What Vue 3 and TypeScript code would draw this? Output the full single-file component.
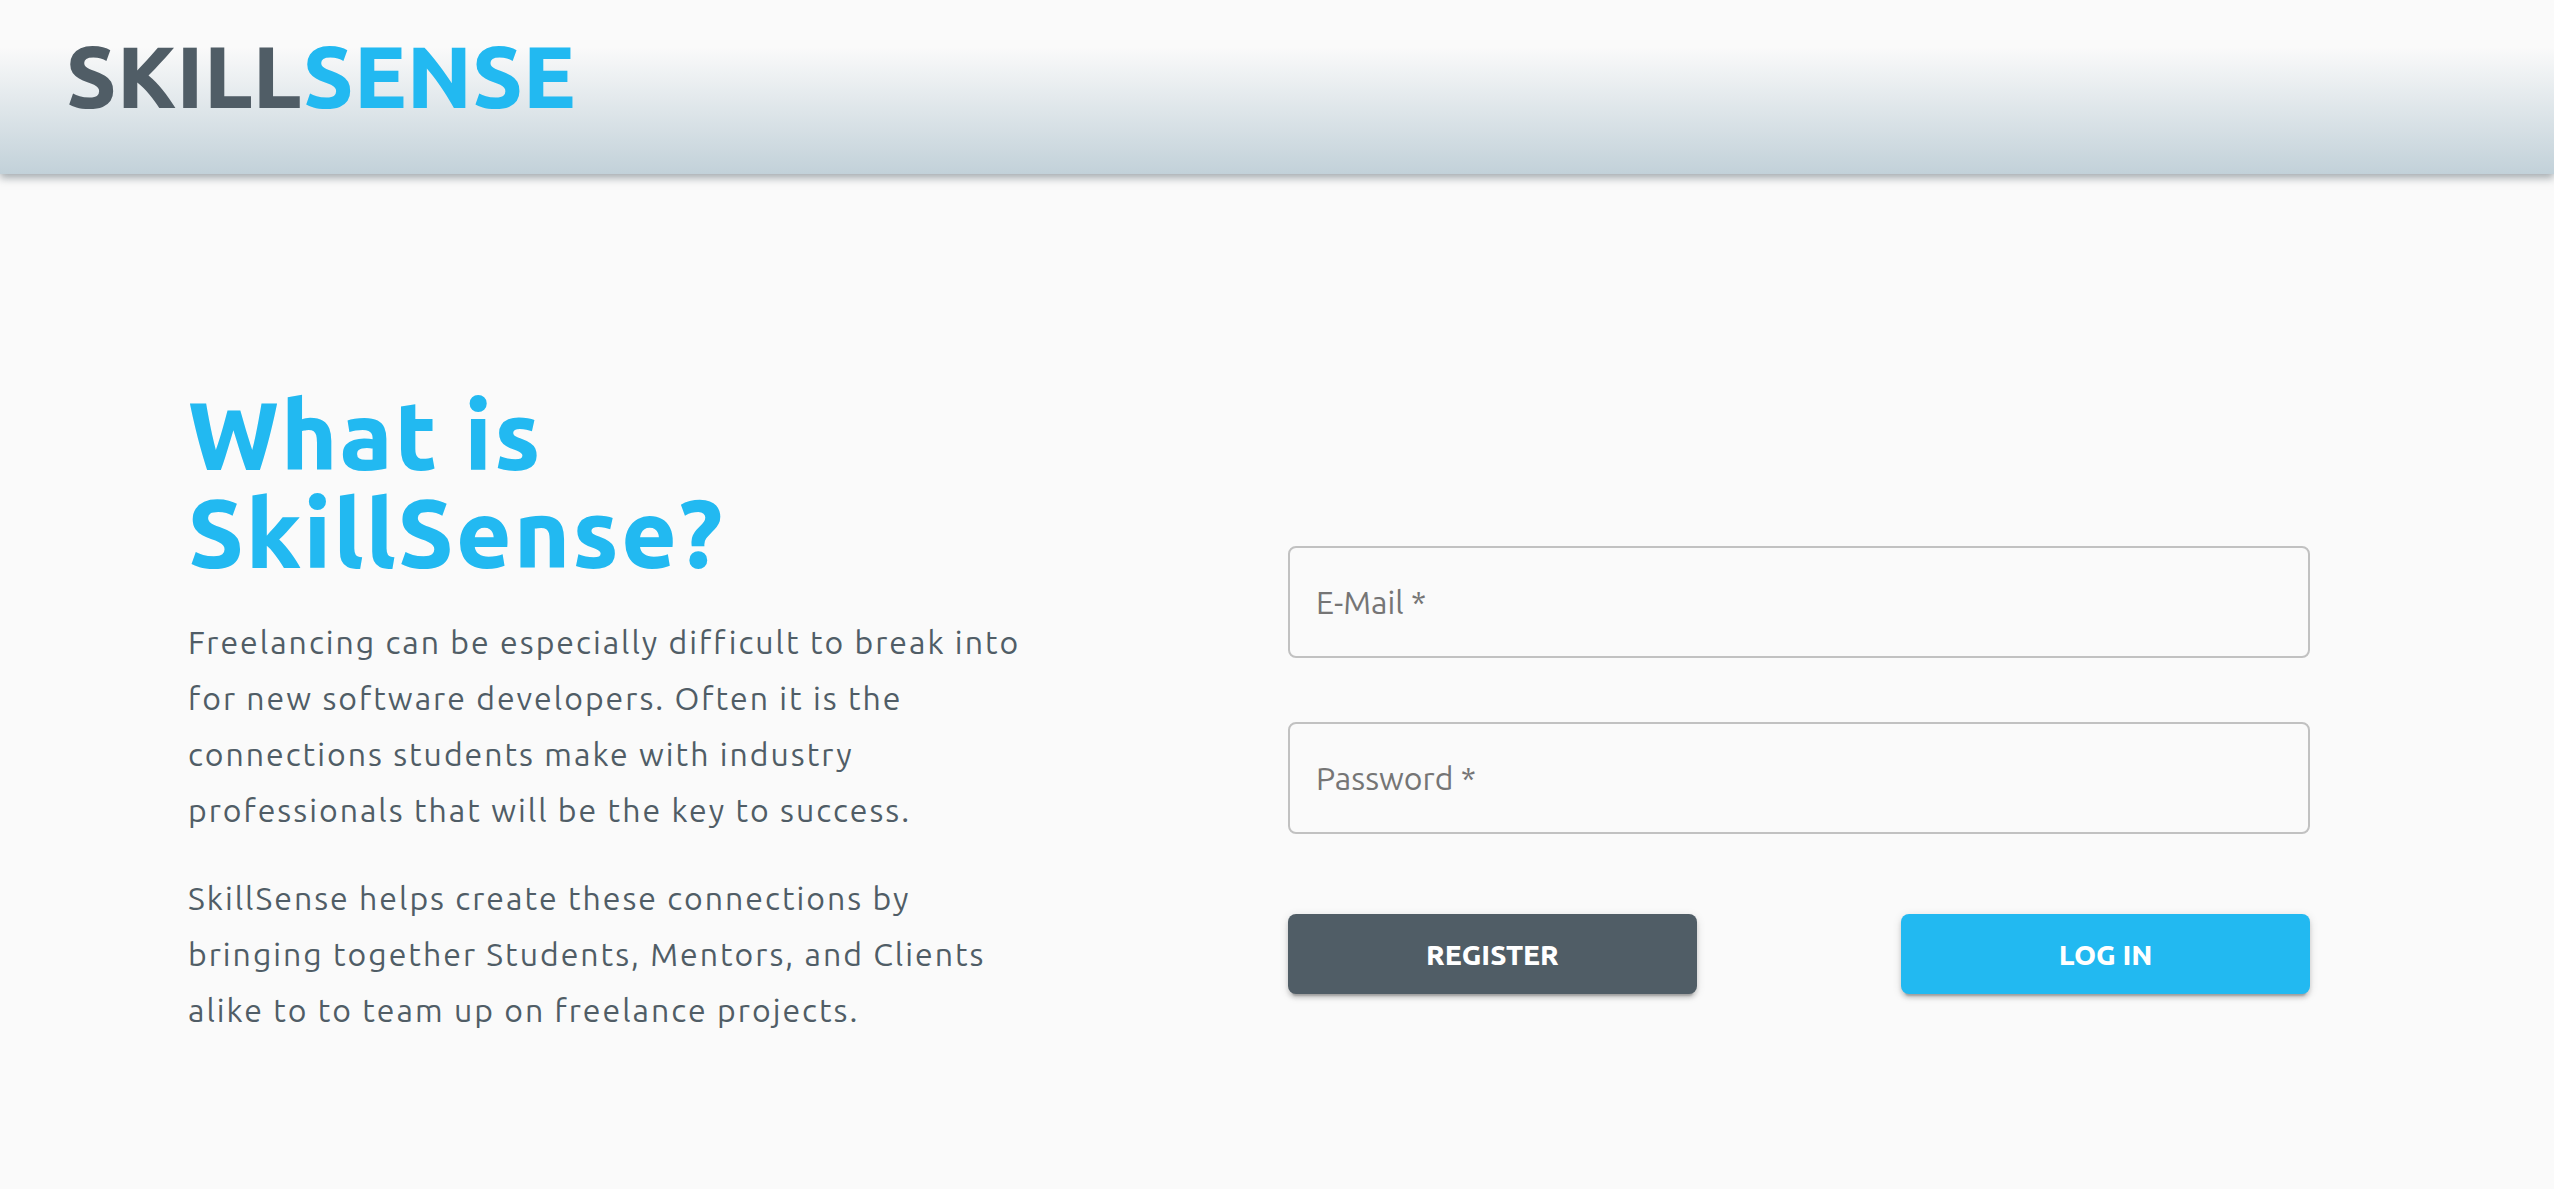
<script setup lang="ts">
import { reactive } from 'vue'

interface Field {
  id: 'email' | 'password'
  label: string
  type: string
}

const fields: Field[] = [
  { id: 'email', label: 'E-Mail', type: 'email' },
  { id: 'password', label: 'Password', type: 'password' },
]

const values = reactive({ email: '', password: '' })
</script>

<template>
  <div class="page">
    <header class="bar">
      <a class="logo" href="#"><span class="logo-skill">SKILL</span><span class="logo-sense">SENSE</span></a>
    </header>
    <main class="content">
      <section class="about">
        <h1>What is SkillSense?</h1>
        <p>
          Freelancing can be especially difficult to break into for new software developers. Often it is the
          connections students make with industry professionals that will be the key to success.
        </p>
        <p>
          SkillSense helps create these connections by bringing together Students, Mentors, and Clients alike to to
          team up on freelance projects.
        </p>
      </section>
      <form class="login" @submit.prevent>
        <div v-for="field in fields" :key="field.id" class="field">
          <input :id="field.id" v-model="values[field.id]" :type="field.type" required />
          <label :for="field.id" :class="{ raised: values[field.id] }">{{ field.label }} *</label>
        </div>
        <div class="actions">
          <button type="button" class="register">REGISTER</button>
          <button type="submit" class="submit">LOG IN</button>
        </div>
      </form>
    </main>
  </div>
</template>

<style>
body {
  margin: 0;
  background: #fafafa;
}
</style>

<style scoped>
.page {
  min-height: 100vh;
  background: #fafafa;
  color: #505d66;
  font-family: Ubuntu, 'Noto Sans', sans-serif;
}

.bar {
  box-sizing: border-box;
  height: 174px;
  padding: 20px 66px;
  background: linear-gradient(#fafafa 27%, #c2d1d9);
  box-shadow: 0 4px 8px rgba(80, 93, 102, 0.5);
}

.logo {
  font-size: 87px;
  line-height: 112px;
  font-weight: 800;
  text-decoration: none;
}

.logo-skill {
  color: #505d66;
}

.logo-sense {
  color: #22b9f1;
}

.content {
  display: flex;
  align-items: flex-start;
  justify-content: space-between;
  padding: 212px 244px 0 188px;
}

.about {
  width: 40%;
}

h1 {
  margin: 0 0 32px;
  color: #22b9f1;
  font-size: 96px;
  line-height: 98px;
  font-weight: 800;
  letter-spacing: 2px;
}

p {
  margin: 0 0 32px;
  font-size: 32px;
  line-height: 56px;
  letter-spacing: 2px;
}

.login {
  width: 1022px;
  max-width: 50%;
  padding-top: 160px;
}

.field {
  position: relative;
  margin-bottom: 64px;
}

.field input {
  display: block;
  box-sizing: border-box;
  width: 100%;
  height: 112px;
  padding: 0 28px;
  border: 2px solid #c1c1c1;
  border-radius: 8px;
  background: transparent;
  color: #505d66;
  font: inherit;
  font-size: 32px;
}

.field label {
  position: absolute;
  top: 36px;
  left: 28px;
  color: #757575;
  font-size: 32px;
  line-height: 40px;
  pointer-events: none;
}

.field input:focus {
  border-color: #22b9f1;
  outline: none;
}

.field input:focus + label,
.field label.raised {
  top: -20px;
  padding: 0 8px;
  background: #fafafa;
  font-size: 24px;
}

.actions {
  display: flex;
  justify-content: space-between;
  padding-top: 16px;
}

button {
  width: 40%;
  height: 80px;
  border: 0;
  border-radius: 8px;
  color: #fff;
  font: inherit;
  font-size: 28px;
  font-weight: 800;
  cursor: pointer;
  box-shadow: 0 6px 2px -4px rgba(0, 0, 0, 0.2), 0 4px 4px rgba(0, 0, 0, 0.14), 0 2px 10px rgba(0, 0, 0, 0.12);
}

.register {
  background: #505d66;
}

.submit {
  background: #22b9f1;
}
</style>
